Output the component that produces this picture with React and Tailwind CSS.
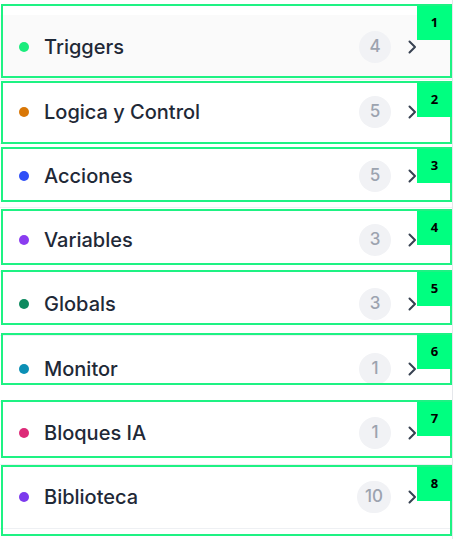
import React from "react";

const rows = [
  { name: "Triggers", count: 4, dot: "bg-[#1aec7c]", h: "h-[65px]", active: true },
  { name: "Logica y Control", count: 5, dot: "bg-[#d97706]", h: "h-[64px]" },
  { name: "Acciones", count: 5, dot: "bg-[#2f4ff7]", h: "h-[64px]" },
  { name: "Variables", count: 3, dot: "bg-[#8a3cf0]", h: "h-[64px]" },
  { name: "Globals", count: 3, dot: "bg-[#0e8a5f]", h: "h-[64px]" },
  { name: "Monitor", count: 1, dot: "bg-[#0b8fb5]", h: "h-[66px]" },
  { name: "Bloques IA", count: 1, dot: "bg-[#dd2a78]", h: "h-[63px]" },
  { name: "Biblioteca", count: 10, dot: "bg-[#7c3aed]", h: "h-[64px]" },
];

const boxes = [
  { n: 1, top: 4, h: 74 },
  { n: 2, top: 81, h: 63 },
  { n: 3, top: 147, h: 55 },
  { n: 4, top: 209, h: 56 },
  { n: 5, top: 270, h: 55 },
  { n: 6, top: 333, h: 52 },
  { n: 7, top: 400, h: 58 },
  { n: 8, top: 465, h: 71 },
];

function Chevron() {
  return (
    <svg width="9" height="14" viewBox="0 0 9 14" fill="none" className="shrink-0">
      <polyline
        points="1.5,1.5 7,7 1.5,12.5"
        stroke="#374151"
        strokeWidth="2"
        strokeLinecap="round"
        strokeLinejoin="round"
      />
    </svg>
  );
}

export default function App() {
  return (
    <div className="relative w-[456px] h-[539px] bg-white overflow-hidden font-['Inter',sans-serif]">
      <div className="w-[453px] h-full border-r border-[#e5e7eb] pt-[15px]">
        {rows.map((r) => (
          <div
            key={r.name}
            className={`flex items-center ${r.h} pl-[19px] pr-[35px] border-b border-[#eef0f3] ${
              r.active ? "bg-[#fafafa]" : "bg-white"
            }`}
          >
            <span className={`w-[10px] h-[10px] rounded-full ${r.dot} shrink-0`} />
            <span className="ml-[15px] text-[20px] font-medium text-[#1f2937]">
              {r.name}
            </span>
            <span className="ml-auto min-w-[32px] h-[32px] px-[8px] rounded-full bg-[#f1f2f5] flex items-center justify-center text-[17px] font-medium text-[#9ca3af]">
              {r.count}
            </span>
            <span className="ml-[17px] flex items-center">
              <Chevron />
            </span>
          </div>
        ))}
      </div>

      {boxes.map((b) => (
        <div
          key={b.n}
          className="absolute left-[1px] w-[451px] border-[2px] border-[#1ef283]"
          style={{ top: b.top, height: b.h }}
        >
          <div className="absolute right-[-2px] top-[0px] w-[35px] h-[34px] bg-[#00ff80] flex items-center justify-center text-[13px] font-bold text-black font-['Open_Sans',sans-serif]">
            {b.n}
          </div>
        </div>
      ))}
    </div>
  );
}
